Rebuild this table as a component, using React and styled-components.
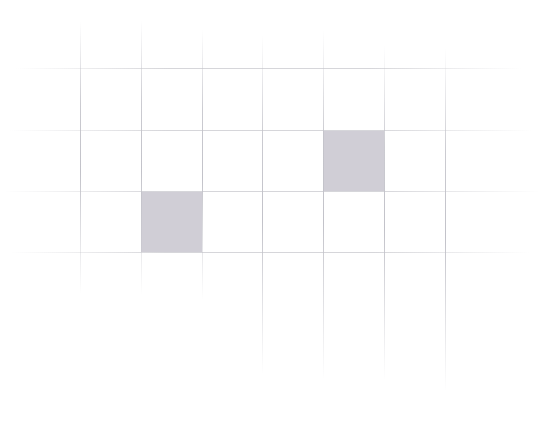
import React from 'react';
import styled, { createGlobalStyle } from 'styled-components';

const GlobalStyle = createGlobalStyle`
    html, body {
        margin: 0;
        padding: 0;
        background: #ffffff;
    }
`;

// line positions measured off the reference
const COLS = [80, 141, 202, 262, 323, 384, 445];
const ROWS = [68, 130, 191, 252];

// how far each vertical line reaches before it has faded out
const V_EXTENT = [
    [22, 294],
    [20, 296],
    [30, 300],
    [35, 374],
    [30, 380],
    [46, 380],
    [48, 392],
];

const H_EXTENT = [
    [16, 522],
    [10, 532],
    [4, 540],
    [10, 530],
];

const FILLED = [
    { col: 5, row: 2 },
    { col: 2, row: 3 },
];

const V_COLOR = '#c2c2c9';
const H_COLOR = '#d6d6da';

const Stage = styled.div`
    position: relative;
    width: 547px;
    height: 426px;
    overflow: hidden;
    padding: ${ROWS[0]}px 0 0 ${COLS[0]}px;
    box-sizing: border-box;
`;

const Board = styled.div`
    display: grid;
    grid-template-columns: 61px 61px 60px 61px 61px 61px;
    grid-template-rows: 62px 61px 61px;
    width: ${COLS[6] - COLS[0]}px;
`;

const Cell = styled.div`
    grid-column: ${(p) => p.$col};
    grid-row: ${(p) => p.$row};
    background: #d0ced6;
`;

const Lines = styled.svg`
    position: absolute;
    inset: 0;
    pointer-events: none;
`;

function GridLines() {
    return (
        <Lines width="547" height="426" viewBox="0 0 547 426">
            <defs>
                {COLS.map((x, i) => (
                    <linearGradient
                        key={`vg${i}`}
                        id={`vg${i}`}
                        gradientUnits="userSpaceOnUse"
                        x1="0"
                        y1={V_EXTENT[i][0]}
                        x2="0"
                        y2={V_EXTENT[i][1]}
                    >
                        <stop offset="0" stopColor={V_COLOR} stopOpacity="0" />
                        <stop offset="0.3" stopColor={V_COLOR} stopOpacity="0.85" />
                        <stop offset="0.55" stopColor={V_COLOR} stopOpacity="1" />
                        <stop offset="1" stopColor={V_COLOR} stopOpacity="0" />
                    </linearGradient>
                ))}
                {ROWS.map((y, i) => (
                    <linearGradient
                        key={`hg${i}`}
                        id={`hg${i}`}
                        gradientUnits="userSpaceOnUse"
                        x1={H_EXTENT[i][0]}
                        y1="0"
                        x2={H_EXTENT[i][1]}
                        y2="0"
                    >
                        <stop offset="0" stopColor={H_COLOR} stopOpacity="0" />
                        <stop offset="0.3" stopColor={H_COLOR} stopOpacity="1" />
                        <stop offset="0.7" stopColor={H_COLOR} stopOpacity="1" />
                        <stop offset="1" stopColor={H_COLOR} stopOpacity="0" />
                    </linearGradient>
                ))}
            </defs>
            {ROWS.map((y, i) => (
                <line
                    key={`h${i}`}
                    x1={H_EXTENT[i][0]}
                    y1={y + 0.5}
                    x2={H_EXTENT[i][1]}
                    y2={y + 0.5}
                    stroke={`url(#hg${i})`}
                    strokeWidth="1"
                />
            ))}
            {COLS.map((x, i) => (
                <line
                    key={`v${i}`}
                    x1={x + 0.5}
                    y1={V_EXTENT[i][0]}
                    x2={x + 0.5}
                    y2={V_EXTENT[i][1]}
                    stroke={`url(#vg${i})`}
                    strokeWidth="1"
                />
            ))}
        </Lines>
    );
}

export default function App() {
    return (
        <>
            <GlobalStyle />
            <Stage>
                <Board>
                    {FILLED.map((c) => (
                        <Cell key={`${c.col}-${c.row}`} $col={c.col} $row={c.row} />
                    ))}
                </Board>
                <GridLines />
            </Stage>
        </>
    );
}
